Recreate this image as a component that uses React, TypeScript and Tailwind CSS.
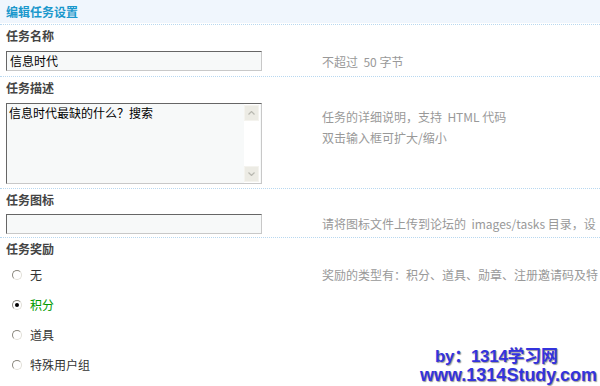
import React from "react";

const font = { fontFamily: '"Noto Sans CJK SC", "Noto Sans", sans-serif' };

function Radio({ checked }: { checked?: boolean }) {
  return (
    <span className="relative inline-block w-[10px] h-[10px] rounded-full border border-t-[#8a877d] border-l-[#8a877d] border-r-[#e2e0d8] border-b-[#e2e0d8] bg-white">
      {checked && (
        <span className="absolute left-[2px] top-[2px] w-[4px] h-[4px] rounded-full bg-black" />
      )}
    </span>
  );
}

function Label({ children }: { children: React.ReactNode }) {
  return (
    <div className="h-[21px] flex items-center pl-[6px] font-bold text-[12px] text-[#444]">
      {children}
    </div>
  );
}

const dotted = "border-b border-dotted border-[#b8d8f0]";

export default function App() {
  return (
    <div className="relative w-[600px] h-[386px] bg-white overflow-hidden text-[12px]" style={font}>
      <div className={`h-[25px] ${dotted}`}>
        <div className="h-[23px] bg-[#f0f6fd] flex items-center pl-[6px] font-bold text-[#1a98cc]">
          编辑任务设置
        </div>
      </div>

      <Label>任务名称</Label>
      <div className={`h-[31px] flex items-center ${dotted}`}>
        <div className="w-[316px] pl-[6px]">
          <div className="w-[256px] h-[20px] bg-[#f7f9f9] border border-t-[#666] border-l-[#666] border-r-[#c8c8c8] border-b-[#c8c8c8] flex items-center pl-[3px] text-black leading-none">
            信息时代
          </div>
        </div>
        <div className="text-[#999] pl-[6px] pt-[1px]">不超过&nbsp; 50 字节</div>
      </div>

      <Label>任务描述</Label>
      <div className={`h-[91px] flex items-start ${dotted}`}>
        <div className="w-[316px] pl-[6px] pt-[5px]">
          <div className="w-[256px] h-[81px] bg-[#f7f9f9] border border-t-[#666] border-l-[#666] border-r-[#c8c8c8] border-b-[#c8c8c8] flex">
            <div className="flex-1 pl-[2px] pt-[1px] text-black leading-[16px]">信息时代最缺的什么？搜索</div>
            <div className="w-[16px] h-full bg-white flex flex-col justify-between py-[1px] mr-[1px]">
              <div className="w-[15px] h-[16px] bg-[#ecebe4] border border-[#f4f3ee] flex items-center justify-center">
                <svg width="7" height="4" viewBox="0 0 7 4"><path d="M0.5 3.5 L3.5 0.5 L6.5 3.5" stroke="#b8b8b0" strokeWidth="1.2" fill="none" /></svg>
              </div>
              <div className="w-[15px] h-[16px] bg-[#ecebe4] border border-[#f4f3ee] flex items-center justify-center">
                <svg width="7" height="4" viewBox="0 0 7 4"><path d="M0.5 0.5 L3.5 3.5 L6.5 0.5" stroke="#b8b8b0" strokeWidth="1.2" fill="none" /></svg>
              </div>
            </div>
          </div>
        </div>
        <div className="text-[#999] pl-[6px] pt-[8px] leading-[21px]">
          <div>任务的详细说明，支持&nbsp; HTML 代码</div>
          <div>双击输入框可扩大/缩小</div>
        </div>
      </div>

      <Label>任务图标</Label>
      <div className={`h-[28px] flex items-center ${dotted}`}>
        <div className="w-[316px] pl-[6px] shrink-0">
          <div className="w-[256px] h-[20px] bg-[#f7f9f9] border border-t-[#666] border-l-[#666] border-r-[#c8c8c8] border-b-[#c8c8c8]" />
        </div>
        <div className="text-[#999] pl-[6px] whitespace-nowrap">请将图标文件上传到论坛的&nbsp; images/tasks 目录，设</div>
      </div>

      <Label>任务奖励</Label>
      <div className="flex">
        <div className="w-[316px] shrink-0 pt-[1px]">
          {[
            { t: "无" },
            { t: "积分", c: true },
            { t: "道具" },
            { t: "特殊用户组" },
          ].map((r, i) => (
            <div key={i} className="h-[30px] flex items-center pl-[12px]">
              <Radio checked={r.c} />
              <span className={`ml-[8px] ${r.c ? "text-[#090]" : "text-[#333]"}`}>{r.t}</span>
            </div>
          ))}
        </div>
        <div className="text-[#999] pl-[6px] pt-[1px] h-[30px] flex items-center whitespace-nowrap">
          奖励的类型有：积分、道具、勋章、注册邀请码及特
        </div>
      </div>

      <div
        className="absolute left-[420px] bottom-[1px] text-[#3333dd] font-bold text-[18px] leading-[19px]"
        style={{ fontFamily: '"Liberation Sans", "Noto Sans CJK SC", sans-serif', textShadow: "1px 1px 1px #999" }}
      >
        <div className="pl-[15px] text-[17px] tracking-[-0.3px]">by：1314学习网</div>
        <div>www.1314Study.com</div>
      </div>
    </div>
  );
}
